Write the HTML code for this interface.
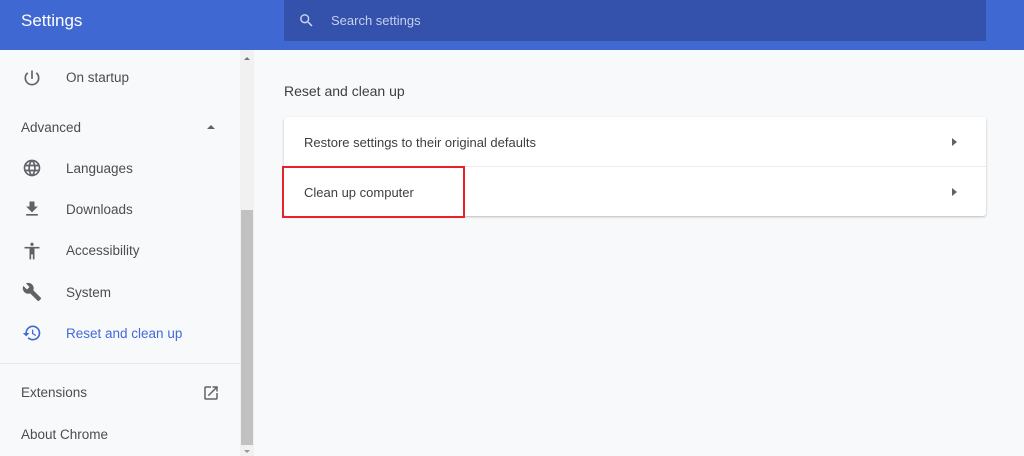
<!DOCTYPE html>
<html><head><style>
*{margin:0;padding:0;box-sizing:border-box}
body{width:1024px;height:456px;overflow:hidden;background:#f8f9fa;font-family:"Liberation Sans",sans-serif;position:relative;color:#3c4043}
.hdr{position:absolute;left:0;top:0;width:1024px;height:50px;background:#4068d2}
.title{position:absolute;left:21px;top:11px;color:#fff;font-size:17px}
.search{position:absolute;left:284px;top:0;width:702px;height:41px;background:#3452ab}
.search span{position:absolute;left:47px;top:13px;color:#c6d0ee;font-size:13px}
.item{position:absolute;left:66px;font-size:13.5px;color:#4a4d51;letter-spacing:0}
.lab{position:absolute;left:21px;font-size:13.5px;color:#4a4d51}
svg.ic{position:absolute;left:22px}
.sb{position:absolute;left:240px;top:50px;width:14px;height:406px;background:#f1f1f1}
.thumb{position:absolute;left:241px;top:210px;width:12px;height:235px;background:#c1c1c1}
.card{position:absolute;left:284px;top:117px;width:702px;height:99px;background:#fff;border-radius:3px;box-shadow:0 1px 2px rgba(0,0,0,.25)}
.row{position:absolute;left:20px;font-size:13px;color:#3c4043}
.arr{position:absolute;left:668px;width:0;height:0;border-top:4px solid transparent;border-bottom:4px solid transparent;border-left:5px solid #5f6368}
</style></head><body>
<div class="hdr"><div class="title">Settings</div>
<div class="search"><svg style="position:absolute;left:14px;top:12px" width="17" height="17" viewBox="0 0 24 24"><path fill="#d0d8f0" d="M15.5 14h-.79l-.28-.27A6.47 6.47 0 0 0 16 9.5 6.5 6.5 0 1 0 9.5 16c1.61 0 3.09-.59 4.23-1.57l.27.28v.79l5 4.99L20.49 19l-4.99-5zm-6 0C7.01 14 5 11.99 5 9.5S7.01 5 9.5 5 14 7.01 14 9.5 11.99 14 9.5 14z"/></svg><span>Search settings</span></div></div>

<svg class="ic" style="top:68px" width="20" height="20" viewBox="0 0 24 24"><path fill="#5f6368" d="M13 3h-2v10h2V3zm4.83 2.17l-1.42 1.42A6.92 6.92 0 0 1 19 12c0 3.87-3.13 7-7 7A6.995 6.995 0 0 1 7.58 6.58L6.17 5.17A8.932 8.932 0 0 0 3 12a9 9 0 0 0 18 0c0-2.74-1.23-5.18-3.17-6.83z"/></svg>
<div class="item" style="top:70px">On startup</div>
<div class="lab" style="top:120px">Advanced</div>
<div style="position:absolute;left:207px;top:125px;border-left:4px solid transparent;border-right:4px solid transparent;border-bottom:4px solid #5f6368"></div>
<svg class="ic" style="top:158px" width="20" height="20" viewBox="0 0 24 24"><path fill="#5f6368" d="M11.99 2C6.47 2 2 6.48 2 12s4.47 10 9.99 10C17.52 22 22 17.52 22 12S17.52 2 11.99 2zm6.93 6h-2.95a15.65 15.65 0 0 0-1.38-3.56A8.03 8.03 0 0 1 18.92 8zM12 4.04c.83 1.2 1.48 2.53 1.91 3.96h-3.82c.43-1.43 1.08-2.76 1.91-3.96zM4.26 14C4.1 13.36 4 12.69 4 12s.1-1.36.26-2h3.38c-.08.66-.14 1.32-.14 2s.06 1.34.14 2H4.26zm.82 2h2.95c.32 1.25.78 2.45 1.38 3.56A7.987 7.987 0 0 1 5.08 16zm2.95-8H5.08a7.987 7.987 0 0 1 4.33-3.56A15.65 15.65 0 0 0 8.03 8zM12 19.96c-.83-1.2-1.48-2.53-1.91-3.96h3.82c-.43 1.43-1.08 2.76-1.91 3.96zM14.34 14H9.66c-.09-.66-.16-1.32-.16-2s.07-1.35.16-2h4.68c.09.65.16 1.32.16 2s-.07 1.34-.16 2zm.25 5.56c.6-1.11 1.06-2.31 1.38-3.56h2.95a8.03 8.03 0 0 1-4.33 3.56zM16.36 14c.08-.66.14-1.32.14-2s-.06-1.34-.14-2h3.38c.16.64.26 1.31.26 2s-.1 1.36-.26 2h-3.38z"/></svg>
<div class="item" style="top:161px">Languages</div>
<svg class="ic" style="top:199px" width="20" height="20" viewBox="0 0 24 24"><path fill="#5f6368" d="M19 9h-4V3H9v6H5l7 7 7-7zM5 18v2h14v-2H5z"/></svg>
<div class="item" style="top:202px">Downloads</div>
<svg class="ic" style="top:241px" width="20" height="20" viewBox="0 0 24 24"><path fill="#5f6368" d="M12 2c1.1 0 2 .9 2 2s-.9 2-2 2-2-.9-2-2 .9-2 2-2zm9 7h-6v13h-2v-6h-2v6H9V9H3V7h18v2z"/></svg>
<div class="item" style="top:243px">Accessibility</div>
<svg class="ic" style="top:282px" width="20" height="20" viewBox="0 0 24 24"><path fill="#5f6368" d="M22.7 19l-9.1-9.1c.9-2.3.4-5-1.5-6.9-2-2-5-2.4-7.4-1.3L9 6 6 9 1.6 4.7C.4 7.1.9 10.1 2.9 12.1c1.9 1.9 4.6 2.4 6.9 1.5l9.1 9.1c.4.4 1 .4 1.4 0l2.3-2.3c.5-.4.5-1.1.1-1.4z"/></svg>
<div class="item" style="top:285px">System</div>
<svg class="ic" style="top:323px" width="20" height="20" viewBox="0 0 24 24"><path fill="#3f6ad8" d="M13 3a9 9 0 0 0-9 9H1l3.89 3.89.07.14L9 12H6c0-3.87 3.13-7 7-7s7 3.13 7 7-3.13 7-7 7c-1.93 0-3.68-.79-4.94-2.06l-1.42 1.42A8.954 8.954 0 0 0 13 21a9 9 0 0 0 0-18zm-1 5v5l4.28 2.54.72-1.21-3.5-2.08V8H12z"/></svg>
<div class="item" style="top:326px;color:#3f6ad8">Reset and clean up</div>
<div style="position:absolute;left:0;top:363px;width:240px;height:1px;background:#e4e6e8"></div>
<div class="lab" style="top:385px">Extensions</div>
<svg style="position:absolute;left:202px;top:384px" width="18" height="18" viewBox="0 0 24 24"><path fill="#5f6368" d="M19 19H5V5h7V3H5a2 2 0 0 0-2 2v14a2 2 0 0 0 2 2h14c1.1 0 2-.9 2-2v-7h-2v7zM14 3v2h3.59l-9.83 9.83 1.41 1.41L19 6.41V10h2V3h-7z"/></svg>
<div class="lab" style="top:427px">About Chrome</div>
<div class="sb"></div><div class="thumb"></div>
<div style="position:absolute;left:244px;top:57px;border-left:3px solid transparent;border-right:3px solid transparent;border-bottom:3px solid #777"></div>
<div style="position:absolute;left:244px;top:450px;border-left:3px solid transparent;border-right:3px solid transparent;border-top:3px solid #999"></div>

<div style="position:absolute;left:284px;top:83px;font-size:14px;color:#3c4043">Reset and clean up</div>
<div class="card">
<div class="row" style="top:18px">Restore settings to their original defaults</div>
<div class="arr" style="top:21px"></div>
<div style="position:absolute;left:0;top:49px;width:702px;height:1px;background:#eceded"></div>
<div class="row" style="top:68px">Clean up computer</div>
<div class="arr" style="top:71px"></div>
</div>
<div style="position:absolute;left:282px;top:166px;width:183px;height:52px;border:2px solid #e8222a"></div>
</body></html>
